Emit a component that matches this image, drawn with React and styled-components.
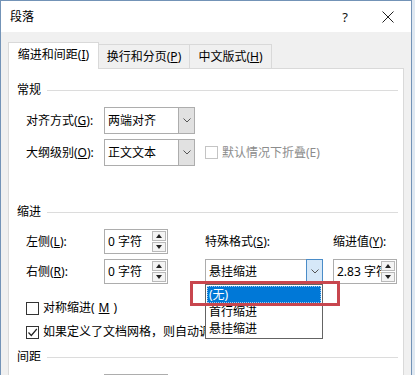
import React from "react";
import styled, { createGlobalStyle } from "styled-components";

const GlobalStyle = createGlobalStyle`
  html, body { margin: 0; padding: 0; background: #dfe8f1; }
  body {
    font-family: "Noto Sans", "Noto Sans CJK SC", sans-serif;
    font-size: 12px;
    color: #000;
  }
  * { box-sizing: border-box; }
`;

const Dialog = styled.div`
  width: 412px;
  height: 375px;
  overflow: hidden;
  border: 1px solid #7393b7;
  border-bottom: none;
  background: #f0f0f0;
  display: flex;
  flex-direction: column;
`;

const TitleBar = styled.div`
  height: 31px;
  flex: none;
  background: #fff;
  display: flex;
  align-items: center;
  padding-left: 9px;
`;

const Title = styled.div`
  flex: 1;
  line-height: 16px;
`;

const HelpButton = styled.div`
  width: 40px;
  text-align: center;
  font-size: 13px;
  line-height: 16px;
  color: #111;
`;

const CloseButton = styled.div`
  width: 46px;
  height: 31px;
  display: flex;
  align-items: center;
  justify-content: center;
`;

const Body = styled.div`
  flex: 1;
  display: flex;
  flex-direction: column;
  padding: 10px 7px 0 7px;
`;

const Tabs = styled.div`
  height: 27px;
  flex: none;
  display: flex;
  align-items: flex-end;
  position: relative;
  z-index: 1;
`;

const Tab = styled.div`
  width: ${(p) => p.$w}px;
  height: ${(p) => (p.$active ? 27 : 25)}px;
  margin-left: ${(p) => (p.$first ? 0 : -1)}px;
  border: 1px solid #d9d9d9;
  border-bottom: ${(p) => (p.$active ? "none" : "1px solid #d9d9d9")};
  background: ${(p) => (p.$active ? "#fff" : "#f0f0f0")};
  display: flex;
  align-items: center;
  justify-content: center;
  padding-bottom: ${(p) => (p.$active ? 2 : 0)}px;
  line-height: 16px;
  white-space: nowrap;
  position: relative;
  z-index: ${(p) => (p.$active ? 2 : 1)};
`;

const Panel = styled.div`
  flex: 1;
  margin-top: -1px;
  background: #fff;
  border: 1px solid #d9d9d9;
  padding: 13px 5px 0 8px;
`;

const SectionHeader = styled.div`
  display: flex;
  align-items: center;
  gap: 6px;
  height: 16px;
  line-height: 16px;
  margin-top: ${(p) => p.$mt || 0}px;
  &::after {
    content: "";
    flex: 1;
    height: 1px;
    background: #dcdcdc;
  }
`;

const TopGrid = styled.div`
  display: grid;
  grid-template-columns: 78px 91px auto;
  grid-template-rows: 27px 27px;
  row-gap: 5px;
  align-items: center;
  padding-left: 9px;
  margin-top: 9px;
`;

const Label = styled.div`
  line-height: 16px;
  white-space: nowrap;
  grid-area: ${(p) => p.$area || "auto"};
`;

const Select = styled.div`
  height: ${(p) => p.$h || 27}px;
  border: 1px solid #adadad;
  background: #fff;
  display: flex;
  width: 100%;
`;

const SelectValue = styled.div`
  flex: 1;
  padding-left: 3px;
  display: flex;
  align-items: center;
  line-height: 16px;
  white-space: nowrap;
`;

const SelectButton = styled.div`
  width: ${(p) => (p.$open ? 17 : 16)}px;
  display: flex;
  align-items: center;
  justify-content: center;
  background: ${(p) => (p.$open ? "#d6e8f8" : "#e1e1e1")};
  border-left: 1px solid #adadad;
  ${(p) =>
    p.$open &&
    `
    border: 1px solid #4a8cc8;
    margin: -1px -1px -1px 0;
  `}
`;

const CheckRow = styled.div`
  display: flex;
  align-items: center;
  gap: 4px;
  height: 16px;
  line-height: 16px;
  white-space: nowrap;
  color: ${(p) => (p.$disabled ? "#8c8c8c" : "#000")};
  margin-left: ${(p) => p.$ml || 0}px;
  margin-top: ${(p) => p.$mt || 0}px;
  padding-left: ${(p) => p.$pl || 0}px;
`;

const Box = styled.div`
  width: 13px;
  height: 13px;
  flex: none;
  border: 1px solid ${(p) => (p.$disabled ? "#c4c4c4" : "#333")};
  background: #fff;
  display: flex;
  align-items: center;
  justify-content: center;
`;

const IndentGrid = styled.div`
  display: grid;
  grid-template-columns: 78px 64px 37px 118px 10px 64px;
  grid-template-rows: 25px 25px;
  grid-template-areas:
    "l1 s1 . fl . vl"
    "l2 s2 . fs . vs";
  row-gap: 5px;
  align-items: center;
  padding-left: 9px;
  margin-top: 9px;
`;

const Area = styled.div`
  grid-area: ${(p) => p.$area};
  position: relative;
  height: 100%;
  display: flex;
  align-items: center;
`;

const Spin = styled.div`
  height: 25px;
  width: 64px;
  border: 1px solid #adadad;
  background: #fff;
  display: flex;
  align-items: center;
`;

const SpinText = styled.div`
  flex: 1;
  padding-left: 3px;
  overflow: hidden;
  white-space: nowrap;
  line-height: 16px;
`;

const SpinButtons = styled.div`
  display: flex;
  flex-direction: column;
  gap: 1px;
  margin-right: 1px;
`;

const SpinButton = styled.div`
  width: 14px;
  height: 10px;
  border: 1px solid #b9b9b9;
  background: #f4f4f4;
  display: flex;
  align-items: center;
  justify-content: center;
`;

const DropList = styled.div`
  position: absolute;
  left: 0;
  top: 100%;
  width: 118px;
  background: #fff;
  border: 1px solid #646464;
  padding: 1px;
  z-index: 5;
`;

const DropItem = styled.div`
  height: 17px;
  line-height: 17px;
  padding-left: 2px;
  white-space: nowrap;
  background: ${(p) => (p.$selected ? "#0078d7" : "transparent")};
  color: ${(p) => (p.$selected ? "#fff" : "#000")};
  outline: ${(p) => (p.$selected ? "1px dotted #9cc8ee" : "none")};
  outline-offset: -1px;
`;

const Highlight = styled.div`
  position: absolute;
  left: -15px;
  top: 22px;
  width: 150px;
  height: 25px;
  border: 3px solid #c8464e;
  z-index: 6;
  pointer-events: none;
`;

const BottomRow = styled.div`
  display: grid;
  grid-template-columns: 78px 64px;
  grid-template-rows: 25px;
  align-items: center;
  padding-left: 9px;
  margin-top: 9px;
`;

const Chevron = () => (
  <svg width="8" height="5" viewBox="0 0 8 5">
    <polyline points="0.5,0.5 4,4 7.5,0.5" fill="none" stroke="#555" strokeWidth="1" />
  </svg>
);

const Up = () => (
  <svg width="6" height="4" viewBox="0 0 6 4">
    <polygon points="3,0 6,4 0,4" fill="#222" />
  </svg>
);
const Down = () => (
  <svg width="6" height="4" viewBox="0 0 6 4">
    <polygon points="0,0 6,0 3,4" fill="#222" />
  </svg>
);

const SpinBox = ({ value }) => (
  <Spin>
    <SpinText>{value}</SpinText>
    <SpinButtons>
      <SpinButton>
        <Up />
      </SpinButton>
      <SpinButton>
        <Down />
      </SpinButton>
    </SpinButtons>
  </Spin>
);

const Check = () => (
  <svg width="11" height="11" viewBox="0 0 11 11">
    <polyline points="1.5,5.5 4.3,8.5 9.8,2" fill="none" stroke="#222" strokeWidth="1.2" />
  </svg>
);

export default function App() {
  return (
    <>
      <GlobalStyle />
      <Dialog>
        <TitleBar>
          <Title>段落</Title>
          <HelpButton>?</HelpButton>
          <CloseButton>
            <svg width="12" height="12" viewBox="0 0 12 12">
              <path d="M0.5 0.5 L11.5 11.5 M11.5 0.5 L0.5 11.5" stroke="#222" strokeWidth="1" />
            </svg>
          </CloseButton>
        </TitleBar>
        <Body>
          <Tabs>
            <Tab $active $first $w={91}>
              缩进和间距(<u>I</u>)
            </Tab>
            <Tab $w={92}>
              换行和分页(<u>P</u>)
            </Tab>
            <Tab $w={83}>
              中文版式(<u>H</u>)
            </Tab>
          </Tabs>
          <Panel>
            <SectionHeader>常规</SectionHeader>
            <TopGrid>
              <Label>
                对齐方式(<u>G</u>):
              </Label>
              <Select>
                <SelectValue>两端对齐</SelectValue>
                <SelectButton>
                  <Chevron />
                </SelectButton>
              </Select>
              <div />
              <Label>
                大纲级别(<u>O</u>):
              </Label>
              <Select>
                <SelectValue>正文文本</SelectValue>
                <SelectButton>
                  <Chevron />
                </SelectButton>
              </Select>
              <CheckRow $disabled $ml={10}>
                <Box $disabled />
                默认情况下折叠(E)
              </CheckRow>
            </TopGrid>

            <SectionHeader $mt={38}>缩进</SectionHeader>
            <IndentGrid>
              <Label $area="l1">
                左侧(<u>L</u>):
              </Label>
              <Area $area="s1">
                <SpinBox value="0 字符" />
              </Area>
              <Label $area="fl">
                特殊格式(<u>S</u>):
              </Label>
              <Label $area="vl">
                缩进值(<u>Y</u>):
              </Label>
              <Label $area="l2">
                右侧(<u>R</u>):
              </Label>
              <Area $area="s2">
                <SpinBox value="0 字符" />
              </Area>
              <Area $area="fs">
                <Select $h={26}>
                  <SelectValue>悬挂缩进</SelectValue>
                  <SelectButton $open>
                    <Chevron />
                  </SelectButton>
                </Select>
                <DropList>
                  <DropItem $selected>(无)</DropItem>
                  <DropItem>首行缩进</DropItem>
                  <DropItem>悬挂缩进</DropItem>
                </DropList>
                <Highlight />
              </Area>
              <Area $area="vs">
                <SpinBox value="2.83 字符" />
              </Area>
            </IndentGrid>
            <CheckRow $mt={16} $pl={9}>
              <Box />
              对称缩进(<u>M</u>)
            </CheckRow>
            <CheckRow $mt={8} $pl={9}>
              <Box>
                <Check />
              </Box>
              如果定义了文档网格，则自动调整右缩进(<u>D</u>)
            </CheckRow>
            <SectionHeader $mt={9}>间距</SectionHeader>
            <BottomRow>
              <Label>
                段前(<u>B</u>):
              </Label>
              <SpinBox value="0 行" />
            </BottomRow>
          </Panel>
        </Body>
      </Dialog>
    </>
  );
}
